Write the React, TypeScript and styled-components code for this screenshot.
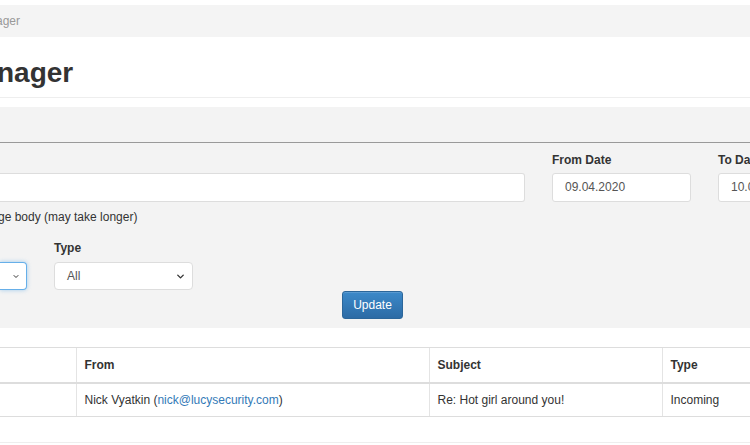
import React from 'react'
import styled, {createGlobalStyle} from 'styled-components'
import {ChevronDown} from 'lucide-react'

const GlobalStyle = createGlobalStyle`
  body {
    margin: 0;
    background: #fff;
    font-family: "Liberation Sans", Arial, sans-serif;
    font-size: 12px;
    color: #333;
    overflow: hidden;
  }
`

const Page = styled.div`
  width: 750px;
  padding-top: 5px;
  display: flex;
  flex-direction: column;
`

const Breadcrumb = styled.div`
  height: 32px;
  line-height: 32px;
  background: #f4f4f4;
  color: #999;
  font-size: 12px;
  text-indent: -4px;
`

const TitleBar = styled.div`
  padding: 22px 0 10px;
  border-bottom: 1px solid #eee;
  margin-bottom: 9px;
`

const Title = styled.h1`
  margin: 0;
  font-size: 28px;
  line-height: 28px;
  font-weight: bold;
  color: #333;
  text-indent: -3px;
`

const Panel = styled.div`
  background: #f3f3f3;
  padding-bottom: 9px;
`

const PanelHead = styled.div`
  height: 35px;
  border-bottom: 1px solid #999;
`

const FieldRow = styled.div`
  display: grid;
  grid-template-columns: ${p => p.$cols};
  column-gap: 27px;
  align-items: end;
  padding-top: ${p => p.$top}px;
`

const Field = styled.div`
  display: flex;
  flex-direction: column;
`

const Label = styled.label`
  font-weight: bold;
  line-height: 17px;
  margin-bottom: ${p => p.$gap ?? 4}px;
`

const TextInput = styled.div`
  height: 29px;
  box-sizing: border-box;
  background: #fff;
  border: 1px solid #ddd;
  border-radius: 3px;
  padding: 0 12px;
  line-height: 27px;
  color: #555;
`

const WideInput = styled(TextInput)`
  border-left: none;
  border-radius: 0 3px 3px 0;
`

const CheckNote = styled.div`
  margin-top: 7px;
  line-height: 17px;
  text-indent: -2px;
`

const SelectBox = styled.div`
  height: 28px;
  box-sizing: border-box;
  background: #fff;
  border: 1px solid ${p => (p.$focused ? '#66afe9' : '#ddd')};
  border-left: ${p => (p.$focused ? 'none' : undefined)};
  border-radius: ${p => (p.$focused ? '0 4px 4px 0' : '4px')};
  box-shadow: ${p => (p.$focused ? '0 0 4px rgba(102,175,233,0.6)' : 'none')};
  padding: 0 6px 0 12px;
  display: flex;
  align-items: center;
  justify-content: space-between;
  color: #555;
`

const ButtonRow = styled.div`
  display: flex;
  justify-content: center;
  padding-right: 5px;
  margin-top: 1px;
`

const Button = styled.button`
  height: 28px;
  padding: 0 10px;
  font-family: inherit;
  font-size: 12px;
  color: #fff;
  border: 1px solid #2b669a;
  border-radius: 3px;
  background: linear-gradient(#3c89c9, #2c6ba5);
  box-shadow: inset 0 1px 0 rgba(255,255,255,0.15);
`

const Table = styled.table`
  margin-top: 19px;
  width: 800px;
  border-collapse: collapse;
  table-layout: fixed;
`

const Th = styled.th`
  text-align: left;
  font-weight: bold;
  height: 34px;
  padding: 0 8px;
  border-top: 1px solid #ddd;
  border-bottom: 2px solid #ddd;
  border-left: 1px solid #e4e4e4;
  &:first-child { border-left: none; }
`

const Td = styled.td`
  height: 32px;
  padding: 0 8px;
  border-bottom: 1px solid #ddd;
  border-left: 1px solid #e4e4e4;
  &:first-child { border-left: none; }
`

const Link = styled.a`
  color: #337ab7;
  text-decoration: none;
`

const Rule = styled.div`
  margin-top: 25px;
  border-top: 1px solid #eee;
`

export default function App() {
  return (
    <Page>
      <GlobalStyle/>
      <Breadcrumb>ager</Breadcrumb>
      <TitleBar>
        <Title>nager</Title>
      </TitleBar>
      <Panel>
        <PanelHead/>
        <FieldRow $cols="525px 139px 139px" $top={9}>
          <Field>
            <WideInput/>
          </Field>
          <Field>
            <Label>From Date</Label>
            <TextInput>09.04.2020</TextInput>
          </Field>
          <Field>
            <Label>To Date</Label>
            <TextInput>10.04.2020</TextInput>
          </Field>
        </FieldRow>
        <CheckNote>ge body (may take longer)</CheckNote>
        <FieldRow $cols="27px 139px" $top={14}>
          <Field>
            <SelectBox $focused>
              <span/>
              <ChevronDown size={11} strokeWidth={3} color="#333"/>
            </SelectBox>
          </Field>
          <Field>
            <Label $gap={5}>Type</Label>
            <SelectBox>
              <span>All</span>
              <ChevronDown size={11} strokeWidth={3} color="#333"/>
            </SelectBox>
          </Field>
        </FieldRow>
        <ButtonRow>
          <Button>Update</Button>
        </ButtonRow>
      </Panel>
      <Table>
        <colgroup>
          <col style={{width: 76}}/>
          <col style={{width: 353}}/>
          <col style={{width: 233}}/>
          <col/>
        </colgroup>
        <thead>
          <tr>
            <Th/>
            <Th>From</Th>
            <Th>Subject</Th>
            <Th>Type</Th>
          </tr>
        </thead>
        <tbody>
          <tr>
            <Td/>
            <Td>Nick Vyatkin (<Link href="#">nick@lucysecurity.com</Link>)</Td>
            <Td>Re: Hot girl around you!</Td>
            <Td>Incoming</Td>
          </tr>
        </tbody>
      </Table>
      <Rule/>
    </Page>
  )
}
